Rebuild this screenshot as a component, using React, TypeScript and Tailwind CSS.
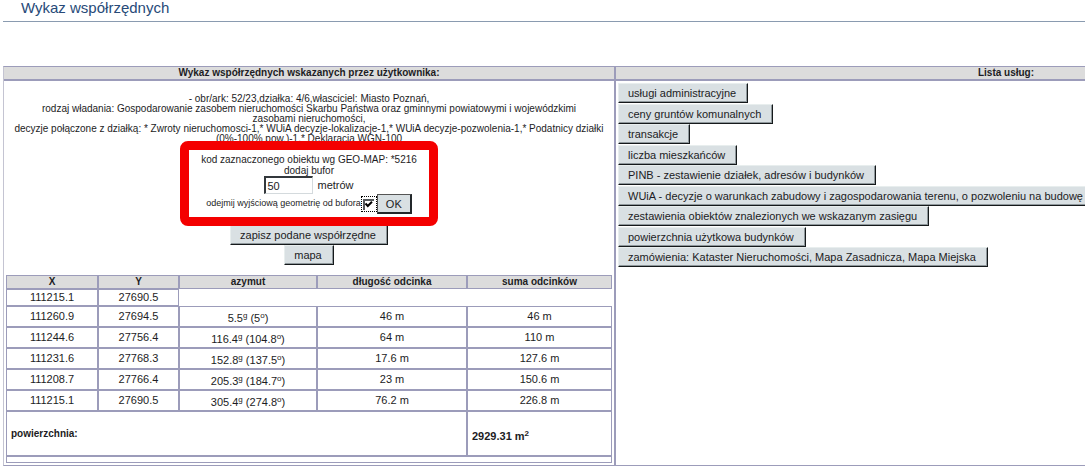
import { useState } from "react";

const services = [
  "usługi administracyjne",
  "ceny gruntów komunalnych",
  "transakcje",
  "liczba mieszkańców",
  "PINB - zestawienie działek, adresów i budynków",
  "WUiA - decyzje o warunkach zabudowy i zagospodarowania terenu, o pozwoleniu na budowę",
  "zestawienia obiektów znalezionych we wskazanym zasięgu",
  "powierzchnia użytkowa budynków",
  "zamówienia: Kataster Nieruchomości, Mapa Zasadnicza, Mapa Miejska",
];

const points = [
  { x: "111260.9", y: "27694.5", grad: "5.5", deg: "5", length: "46 m", sum: "46 m" },
  { x: "111244.6", y: "27756.4", grad: "116.4", deg: "104.8", length: "64 m", sum: "110 m" },
  { x: "111231.6", y: "27768.3", grad: "152.8", deg: "137.5", length: "17.6 m", sum: "127.6 m" },
  { x: "111208.7", y: "27766.4", grad: "205.3", deg: "184.7", length: "23 m", sum: "150.6 m" },
  { x: "111215.1", y: "27690.5", grad: "305.4", deg: "274.8", length: "76.2 m", sum: "226.8 m" },
];

const cell = "border border-[#9c9cba] px-0 pt-0 pb-0.5";
const headCell = "border border-[#9c9cba] bg-[#dcdcdc] p-0 text-[10px] font-bold";
const grayButton =
  "h-5 shrink-0 whitespace-nowrap border border-b-[#15191b] border-l-[#e8eeee] border-r-[#15191b] border-t-[#e8eeee] bg-[#d9e0e3] text-[11px] leading-4 shadow-[inset_-1px_-1px_0_#8f989c]";

function GrayButton({ children }: { children: string }) {
  return (
    <button type="button" className={`${grayButton} pl-[9px] pr-[11px]`}>
      {children}
    </button>
  );
}

function BufferForm() {
  const [distance, setDistance] = useState("50");
  const [subtract, setSubtract] = useState(true);

  return (
    <form
      onSubmit={(e) => e.preventDefault()}
      className="relative -mb-px -mt-[3px] flex h-[85px] w-[258px] flex-col items-center rounded-lg border-[9px] border-[#f40000] bg-white pt-1"
    >
      <div className="text-[10px] leading-3">kod zaznaczonego obiektu wg GEO-MAP: *5216</div>
      <div className="text-[10px] leading-[10px]">dodaj bufor</div>
      <label className="flex items-center gap-1">
        <input
          type="text"
          value={distance}
          onChange={(e) => setDistance(e.target.value)}
          className="h-[18px] w-[49px] border-b border-l-2 border-r border-t-2 border-b-[#d4dadd] border-l-[#33383c] border-r-[#d4dadd] border-t-[#33383c] bg-white px-px text-[11px] leading-3"
        />
        metrów
      </label>
      <div className="flex items-center">
        <label htmlFor="subtract" className="text-[9px]">
          odejmij wyjściową geometrię od bufora
        </label>
        <span className="relative flex size-4 items-center justify-center border border-dotted border-black">
          <input
            id="subtract"
            type="checkbox"
            checked={subtract}
            onChange={(e) => setSubtract(e.target.checked)}
            className="peer size-[11px] appearance-none border-l-2 border-t-2 border-[#55595c] bg-white"
          />
          <svg
            viewBox="0 0 9 9"
            className="pointer-events-none absolute hidden size-[9px] peer-checked:block"
            fill="none"
            stroke="#000"
            strokeWidth="2"
          >
            <path d="M1.5 3.5 3.8 6 8 1.8" />
          </svg>
        </span>
        <button
          type="submit"
          className="h-5 w-[35px] border-b-2 border-l border-r-2 border-t border-b-[#23282b] border-l-[#555] border-r-[#23282b] border-t-[#555] bg-[#d9e0e3] text-[11px] leading-4"
        >
          OK
        </button>
      </div>
    </form>
  );
}

function CoordinatesTable() {
  return (
    <table className="w-full table-fixed border-separate border-spacing-0 text-center leading-3">
      <colgroup>
        <col className="w-[92px]" />
        <col className="w-[81px]" />
        <col className="w-[138px]" />
        <col className="w-[150px]" />
        <col />
      </colgroup>
      <thead>
        <tr className="h-[14px]">
          <th className={headCell}>X</th>
          <th className={headCell}>Y</th>
          <th className={headCell}>azymut</th>
          <th className={headCell}>długość odcinka</th>
          <th className={headCell}>suma odcinków</th>
        </tr>
      </thead>
      <tbody>
        <tr className="h-[17px]">
          <td className={cell}>111215.1</td>
          <td className={cell}>27690.5</td>
        </tr>
        {points.map((p) => (
          <tr key={p.x} className="h-[21px]">
            <td className={cell}>{p.x}</td>
            <td className={cell}>{p.y}</td>
            <td className={cell}>
              <div className="pt-1">
                {p.grad}
                <sup className="text-[8px]">g</sup> ({p.deg}
                <sup className="text-[8px]">o</sup>)
              </div>
            </td>
            <td className={cell}>{p.length}</td>
            <td className={cell}>{p.sum}</td>
          </tr>
        ))}
        <tr className="h-[45px] text-left font-bold">
          <td colSpan={4} className="border border-[#9c9cba] px-1 py-0 text-[10px]">
            powierzchnia:
          </td>
          <td className="border border-[#9c9cba] px-1 pb-0 pt-1">
            2929.31 m<sup className="text-[8px]">2</sup>
          </td>
        </tr>
        <tr className="h-[7px]">
          <td colSpan={5} className={cell}></td>
        </tr>
      </tbody>
    </table>
  );
}

export default function App() {
  return (
    <div className="overflow-hidden bg-white pb-1 pl-[3px] font-['Liberation_Sans',Arial,sans-serif] text-[11px] text-[#1c1c24]">
      <h1 className="h-[22px] border-b border-[#8a9bb0] pl-[18px] text-[15px] leading-4 text-[#274a78]">
        Wykaz współrzędnych
      </h1>

      <main className="mt-11 flex">
        {/* Coordinates */}
        <section className="min-w-0 flex-1 border border-[#9c9cba] border-l-[#c4c4d2]">
          <h2 className="h-[14px] border-b-2 border-[#9c9cba] bg-[#dcdcdc] text-center text-[10px] font-bold leading-3">
            Wykaz współrzędnych wskazanych przez użytkownika:
          </h2>
          <div className="flex flex-col items-center px-0.5 pb-0.5 pt-[13px]">
            <p className="text-center text-[10px] leading-[10px]">
              - obr/ark: 52/23,działka: 4/6,własciciel: Miasto Poznań,
              <br />
              rodzaj władania: Gospodarowanie zasobem nieruchomości Skarbu Państwa oraz gminnymi powiatowymi i wojewódzkimi
              <br />
              zasobami nieruchomości,
              <br />
              decyzje połączone z działką: * Zwroty nieruchomosci-1,* WUiA decyzje-lokalizacje-1,* WUiA decyzje-pozwolenia-1,* Podatnicy działki
              <br />
              (0%-100% pow.)-1,* Deklaracja WGN-100
            </p>
            <BufferForm />
            <div className="mb-[10px] flex flex-col items-center">
              <GrayButton>zapisz podane współrzędne</GrayButton>
              <GrayButton>mapa</GrayButton>
            </div>
            <CoordinatesTable />
          </div>
        </section>

        {/* Services, the panel runs past the right edge of the window */}
        <section className="w-[470px] shrink-0">
          <div className="h-full w-[782px] border border-[#9c9cba]">
            <h2 className="h-[14px] border-b-2 border-[#9c9cba] bg-[#dcdcdc] text-center text-[10px] font-bold leading-3">
              Lista usług:
            </h2>
            <div className="flex h-[188px] flex-col items-start justify-between px-0.5 py-0.5">
              {services.map((s) => (
                <GrayButton key={s}>{s}</GrayButton>
              ))}
            </div>
          </div>
        </section>
      </main>
    </div>
  );
}
